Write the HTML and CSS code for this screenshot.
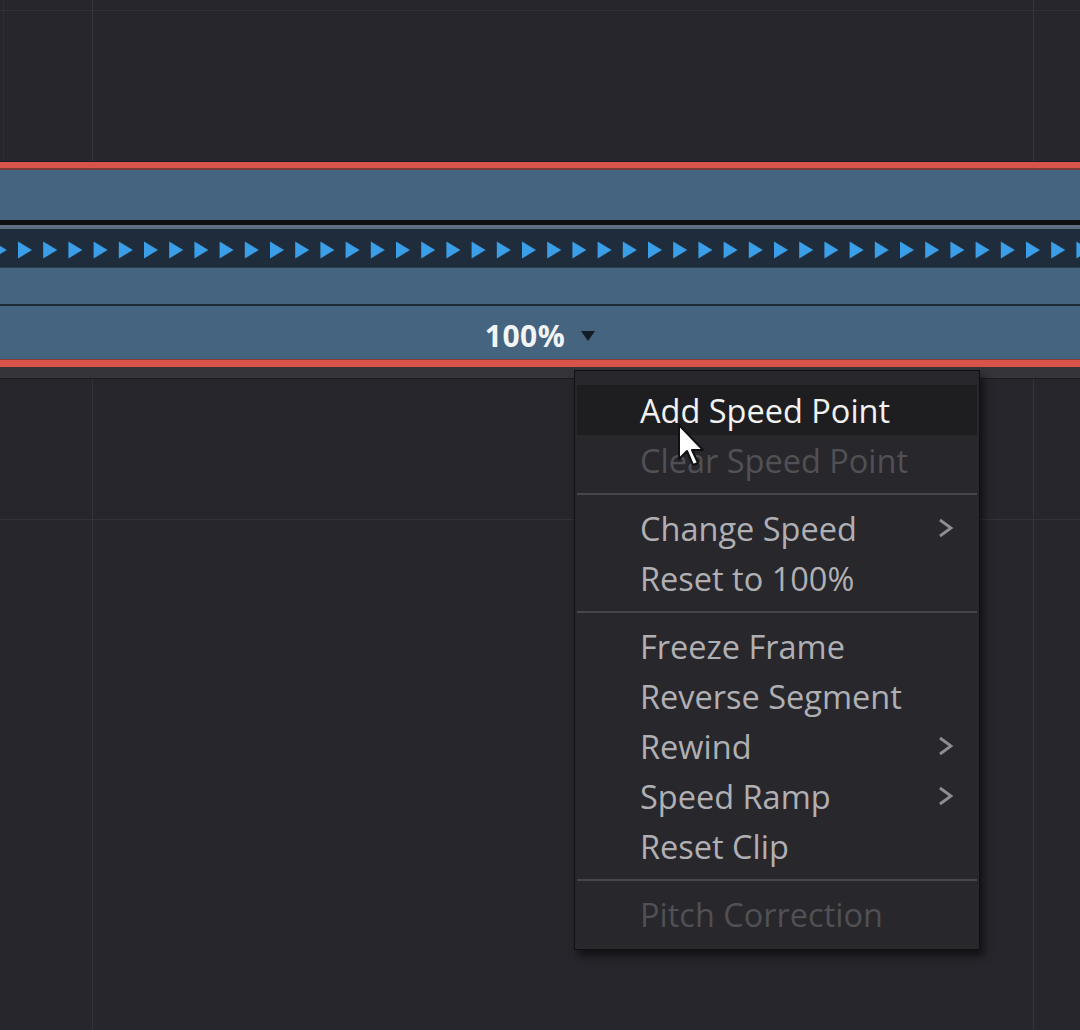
FILE: index.html
```html
<!DOCTYPE html>
<html lang="en">
<head>
  <meta charset="UTF-8">
  <title>Retime Controls</title>
  <link rel="stylesheet" href="styles.css">
</head>
<body>

  <div class="timeline">

    <!-- empty track above the clip -->
    <div class="track track-above"></div>

    <!-- Clip with retime controls -->
    <div class="clip">
      <div class="clip-edge"></div>
      <div class="clip-top"></div>
      <div class="clip-split"></div>
      <div class="speed-strip">
        <svg width="1080" height="38" class="arrows">
          <defs>
            <pattern id="arrow" x="18" y="0" width="25.2" height="38" patternUnits="userSpaceOnUse">
              <polygon points="0,12.5 14,21 0,29.5" fill="#3a9fe8" />
            </pattern>
          </defs>
          <rect width="1080" height="38" fill="url(#arrow)" />
        </svg>
      </div>
      <div class="clip-mid"></div>
      <div class="clip-label">
        <span class="speed-value">100%</span>
        <span class="speed-caret"></span>
      </div>
      <div class="clip-edge bottom"></div>
    </div>

    <!-- empty track below -->
    <div class="track-strip"></div>
    <div class="track track-below"></div>

  </div>

  <!-- Context menu -->
  <div class="menu">
    <div class="menu-item active">Add Speed Point</div>
    <div class="menu-item disabled">Clear Speed Point</div>
    <div class="menu-sep"></div>
    <div class="menu-item">Change Speed
      <svg class="chevron" width="18" height="24" viewBox="0 0 18 24"><path d="M3 4 L14 12 L3 20" fill="none" stroke="#8e8e92" stroke-width="2.8"/></svg>
    </div>
    <div class="menu-item">Reset to 100%</div>
    <div class="menu-sep"></div>
    <div class="menu-item">Freeze Frame</div>
    <div class="menu-item">Reverse Segment</div>
    <div class="menu-item">Rewind
      <svg class="chevron" width="18" height="24" viewBox="0 0 18 24"><path d="M3 4 L14 12 L3 20" fill="none" stroke="#8e8e92" stroke-width="2.8"/></svg>
    </div>
    <div class="menu-item">Speed Ramp
      <svg class="chevron" width="18" height="24" viewBox="0 0 18 24"><path d="M3 4 L14 12 L3 20" fill="none" stroke="#8e8e92" stroke-width="2.8"/></svg>
    </div>
    <div class="menu-item">Reset Clip</div>
    <div class="menu-sep"></div>
    <div class="menu-item disabled">Pitch Correction</div>
  </div>

  <!-- mouse pointer -->
  <svg class="cursor" width="30" height="48" viewBox="0 0 30 48">
    <path d="M2 2 L2 36 L10 28 L16 42 L21 40 L15 27 L26 27 Z" fill="#ffffff" stroke="#111" stroke-width="2" stroke-linejoin="round"/>
  </svg>

</body>
</html>
```

FILE: styles.css
```css
body {
  margin: 0;
  padding: 0;
  background: #27262c;
  font-family: "Open Sans", "Liberation Sans", sans-serif;
  overflow: hidden;
}

.timeline {
  display: flex;
  flex-direction: column;
  width: 1080px;
  height: 1030px;
}

/* Tracks */
.track {
  background-color: #27262c;
}

.track-above {
  height: 162px;
  border-bottom: 1px solid #1b1a1e;
  box-sizing: border-box;
  background:
    linear-gradient(#36353b, #36353b) 92px 0 / 1px 100% no-repeat,
    linear-gradient(#36353b, #36353b) 1033px 0 / 1px 100% no-repeat,
    linear-gradient(#323137, #323137) 0 10px / 100% 1px no-repeat,
    linear-gradient(#2f2e34, #2f2e34) 3px 0 / 1px 100% no-repeat,
    #27262c;
}

.track-strip {
  height: 11px;
  background: #353438;
  border-bottom: 1px solid #1c1b1f;
}

.track-below {
  flex: 1;
  background:
    linear-gradient(#343339, #343339) 92px 0 / 1px 100% no-repeat,
    linear-gradient(#343339, #343339) 1033px 0 / 1px 100% no-repeat,
    linear-gradient(#323137, #323137) 0 140px / 100% 1px no-repeat,
    #27262c;
}

/* Clip */
.clip {
  display: flex;
  flex-direction: column;
  background: #44647f;
}

.clip-edge {
  height: 6px;
  background: #d8544b;
  border-bottom: 2px solid #7a3a3a;
}

.clip-edge.bottom {
  border-bottom: none;
  border-top: 1px solid #8a3a36;
  height: 7px;
}

.clip-top {
  height: 50px;
}

.clip-split {
  height: 5px;
  background: #0f1115;
  border-bottom: 4px solid #5d6f80;
}

.speed-strip {
  height: 38px;
  background: #1f2c3b;
  border-bottom: 1px solid #2b3d50;
}

.arrows {
  display: block;
}

.clip-mid {
  height: 36px;
  border-bottom: 2px solid #1e2b39;
}

.clip-label {
  height: 53px;
  box-sizing: border-box;
  padding-top: 5px;
  display: flex;
  justify-content: center;
  align-items: center;
  gap: 16px;
}

.speed-value {
  color: #f2f4f6;
  font-size: 30px;
  font-weight: 700;
  letter-spacing: 0.5px;
}

.speed-caret {
  width: 0;
  height: 0;
  border-left: 7px solid transparent;
  border-right: 7px solid transparent;
  border-top: 10px solid #131c26;
  margin-top: 2px;
}

/* Context menu */
.menu {
  position: absolute;
  left: 574px;
  top: 370px;
  width: 406px;
  box-sizing: border-box;
  padding: 14px 2px 10px 2px;
  background: #28272c;
  border: 1px solid #111113;
  box-shadow: 4px 6px 8px rgba(0, 0, 0, 0.55);
}

.menu-item {
  height: 50px;
  display: flex;
  align-items: center;
  justify-content: space-between;
  padding: 0 22px 0 63px;
  font-size: 32.5px;
  color: #b0b0b4;
}

.menu-item.active {
  background: #1e1e21;
  color: #f2f2f2;
}

.menu-item.disabled {
  color: #505055;
}

.chevron {
  display: block;
}

.menu-sep {
  height: 2px;
  margin: 8px 0;
  background: #46454b;
}

.cursor {
  position: absolute;
  left: 677px;
  top: 423px;
}
```
